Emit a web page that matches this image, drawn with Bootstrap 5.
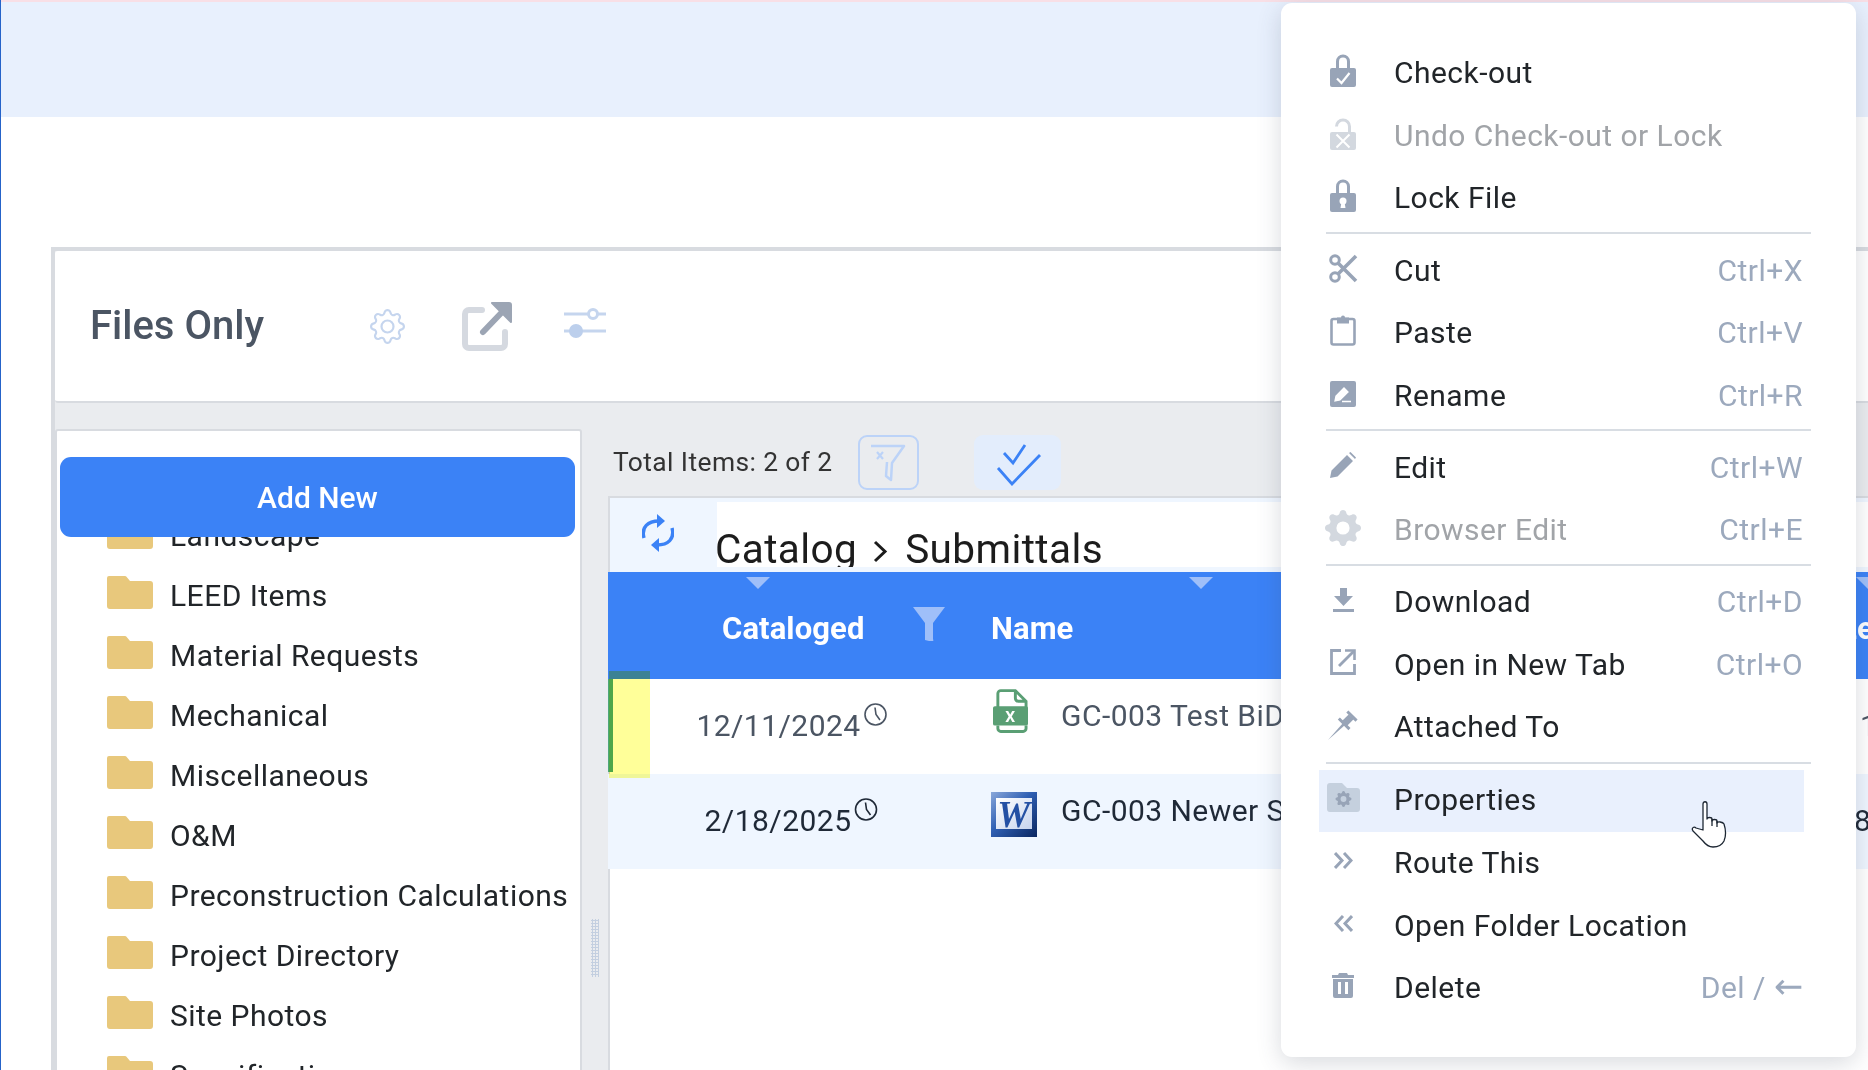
<!DOCTYPE html>
<html lang="en">
<head>
<meta charset="utf-8">
<title>Files Only</title>
<link href="https://cdn.jsdelivr.net/npm/bootstrap@5.3.0/dist/css/bootstrap.min.css" rel="stylesheet">
<style>
html,body{height:1070px;overflow:hidden}
body{font-family:Roboto,"Liberation Sans",sans-serif;color:#212529;background:#fff;border-left:1px solid #2563c9;position:relative;font-size:30px;letter-spacing:.46px}
.top-band{height:117px;background:#e8f0fd;border-top:2px solid #f8dfe6}
.shell{margin:130px 0 0 50px;border-top:4px solid #d8dbe0;border-left:4px solid #d8dbe0;background:#eaecef;height:823px}
.title-bar{height:152px;background:#fff;border-bottom:2px solid #d8dbe0;padding-left:35px;border-radius:3px 0 0 3px}
.title-text{font-size:40px;font-weight:500;color:#4b5563;letter-spacing:0;margin:0;width:280px}
.ico-ext{margin-left:57px}
.ico-sliders{margin:-6px 0 0 51px}
.work{padding-top:26px;height:670px}
.side{width:527px;flex:none;background:#fff;border:2px solid #d8dbe0;border-radius:3px;position:relative;overflow:hidden;height:700px}
.add-btn{position:absolute;left:3px;top:26px;width:515px;height:80px;background:#3b82f6;border:0;border-radius:11px;font-size:30px;font-weight:500;letter-spacing:0;color:#fff;padding-top:7px}
.folders{padding:74px 0 0 50px;margin:0;list-style:none}
.folders li{height:60px;display:flex;align-items:center;gap:17px;white-space:nowrap}
.folders svg{margin-top:-5px;flex:none}
.grip{width:26px;flex:none;padding:490px 0 0 9px}
.grip i{display:block;width:8px;height:58px;background-image:radial-gradient(#c3cfe0 1.1px,transparent 1.2px);background-size:3px 3px}
.main-pane{width:1300px;flex:none}
.tool-row{height:67px;padding:6px 0 0 5px;font-size:26.400px;letter-spacing:.4px;color:#333}
.total-txt{padding-top:8px}
.filter-btn{width:61px;height:55px;border:2px solid #bcd3f8;border-radius:9px;background:transparent;margin-left:25px;padding:0}
.check-btn{width:87px;height:55px;border:0;border-radius:9px;background:#e3edfc;margin-left:55px;padding:4px 0 0 4px}
.table-pane{border-left:2px solid #d8dbe0;border-top:2px solid #d8dbe0;background:#fff;height:600px}
.crumb-row{height:74px;background:#eff6ff;padding-top:4px}
.refresh{width:107px;flex:none;padding:6px 0 0 32px}
.crumb{height:65px;background:#fff;flex:1;overflow:hidden;font-size:40.500px;letter-spacing:.4px;line-height:94px;white-space:nowrap;color:#1c1c1c;text-indent:-2px}
.crumb svg{margin:0 17px 0 16px;vertical-align:0}
.head-row{height:107px;background:#3b82f6;margin-left:-2px;color:#fff;font-weight:700;font-size:31px;letter-spacing:.1px;position:relative}
.hc{position:absolute;top:5px;width:0;height:0;border-left:12px solid transparent;border-right:12px solid transparent;border-top:12px solid #9fbff9}
.hc-a{left:138px}
.hc-b{left:581px}
.hc-c{left:1248px}
.col-date{width:367px;flex:none}
.col-name{width:839px;flex:none;padding-left:16px;overflow:hidden;white-space:nowrap}
.col-next{flex:none;white-space:nowrap}
.head-row .col-date{padding:34px 0 0 114px;display:flex;align-items:flex-start}
.head-row .col-date svg{margin:1px 0 0 49px}
.head-row .col-name{padding-top:34px}
.head-row .col-next{padding-top:34px}
.file-row{height:95px;margin-left:-2px;position:relative;color:#4b5563}
.file-row.alt{background:#eff6ff;color:#1f2937}
.file-row .col-date{display:flex;justify-content:center;padding-top:24px;font-size:30px;line-height:46px}
.file-row .col-date svg{margin:0 0 0 3px}
.file-row .col-name{display:flex;padding-top:9px;font-size:30px}
.slot-ico{width:70px;flex:none}
.xl-ico{display:block;margin-left:2px}
.wd-ico{display:block;margin-top:9px}
.fname{line-height:56px}
.val-a{padding:24px 0 0 46px;line-height:46px}
.val-b{padding:24px 0 0 40px;line-height:46px}
.mark-bar{position:absolute;left:0;top:0;width:5px;height:93px;background:#4ea67a}
.mark-hi{position:absolute;left:1px;top:-8px;width:41px;height:107px;background:#ffff99;mix-blend-mode:multiply;z-index:2}
.ctx{position:absolute;display:block;left:1280px;top:3px;width:575px;height:1054px;margin:0;border:0;border-radius:11px;background:#fff;box-shadow:0 6px 24px rgba(60,70,90,.2);padding:38px 52px 0 38px;font-size:30px;z-index:5}
.ctx .dropdown-item{display:flex;align-items:center;height:62.700px;padding:1.500px 1px 0 0;color:#212529;letter-spacing:.46px}
.ctx .dropdown-item.is-off{color:#a1a4a8}
.ctx .dropdown-item.is-on{background:#e9f0fd}
.ctx .dropdown-item.head-item{padding:0 1px 0 0}
.ctx .dropdown-item.tail{padding:0 1px 2.500px 0}
.ctx .dropdown-divider{margin:3px -7px 4px 7px;border-top:2px solid #d8dde3;opacity:1}
.ctx .dropdown-divider.last-sep{margin:4px -7px 6px 7px}
.ico{width:48px;flex:none;margin-right:27px;display:flex;justify-content:center;padding-bottom:4px}
.key{margin-left:auto;color:#9ca9bd}
.key b{font-family:"DejaVu Sans",sans-serif;font-weight:400;font-size:35px;line-height:1;letter-spacing:0}
.hand{position:absolute;left:1690px;top:800px;z-index:6}
</style>
</head>
<body>
<div class="top-band"></div>
<div class="shell">
  <div class="title-bar d-flex align-items-center">
    <h1 class="title-text">Files Only</h1>
    <svg width="35" height="35" viewBox="0 0 16 16" fill="#c5d5ee"><path d="M8 4.754a3.246 3.246 0 1 0 0 6.492 3.246 3.246 0 0 0 0-6.492zM5.754 8a2.246 2.246 0 1 1 4.492 0 2.246 2.246 0 0 1-4.492 0z"/><path d="M9.796 1.343c-.527-1.79-3.065-1.79-3.592 0l-.094.319a.873.873 0 0 1-1.255.52l-.292-.16c-1.64-.892-3.433.902-2.54 2.541l.159.292a.873.873 0 0 1-.52 1.255l-.319.094c-1.79.527-1.79 3.065 0 3.592l.319.094a.873.873 0 0 1 .52 1.255l-.16.292c-.892 1.64.901 3.434 2.541 2.54l.292-.159a.873.873 0 0 1 1.255.52l.094.319c.527 1.79 3.065 1.79 3.592 0l.094-.319a.873.873 0 0 1 1.255-.52l.292.16c1.64.893 3.434-.902 2.54-2.541l-.159-.292a.873.873 0 0 1 .52-1.255l.319-.094c1.79-.527 1.79-3.065 0-3.592l-.319-.094a.873.873 0 0 1-.52-1.255l.16-.292c.893-1.64-.902-3.433-2.541-2.54l-.292.159a.873.873 0 0 1-1.255-.52l-.094-.319zm-2.633.283c.246-.835 1.428-.835 1.674 0l.094.319a1.873 1.873 0 0 0 2.693 1.115l.291-.16c.764-.415 1.6.42 1.184 1.185l-.159.292a1.873 1.873 0 0 0 1.116 2.692l.318.094c.835.246.835 1.428 0 1.674l-.319.094a1.873 1.873 0 0 0-1.115 2.693l.16.291c.415.764-.42 1.6-1.185 1.184l-.291-.159a1.873 1.873 0 0 0-2.693 1.116l-.094.318c-.246.835-1.428.835-1.674 0l-.094-.319a1.873 1.873 0 0 0-2.692-1.115l-.292.16c-.764.415-1.6-.42-1.184-1.185l.159-.291A1.873 1.873 0 0 0 1.945 8.930l-.319-.094c-.835-.246-.835-1.428 0-1.674l.319-.094A1.873 1.873 0 0 0 3.060 4.377l-.16-.292c-.415-.764.42-1.600 1.185-1.184l.292.159a1.873 1.873 0 0 0 2.692-1.115l.094-.319z"/></svg>
    <svg class="ico-ext" width="51" height="50" viewBox="0 0 51 50" fill="none" stroke-linecap="round" stroke-linejoin="round"><path d="M20 9H7a4 4 0 0 0-4 4v30a4 4 0 0 0 4 4h32a4 4 0 0 0 4-4V31" stroke="#d5d9e0" stroke-width="6"/><path d="M21 31 43 8" stroke="#9ca5b4" stroke-width="6"/><path d="M30 2h17a2 2 0 0 1 2 2v17z" fill="#9ca5b4" stroke="#9ca5b4" stroke-width="2"/></svg>
    <svg class="ico-sliders" width="42" height="30" viewBox="0 0 42 30" fill="none" stroke="#c5d5ee" stroke-width="3"><path d="M0 6h24M34 6h8M0 23h42"/><circle cx="29" cy="6" r="4.500"/><circle cx="12" cy="23" r="7" fill="#bccfec" stroke="none"/></svg>
  </div>
  <div class="work d-flex">
    <aside class="side">
      <ul class="folders">
        <li><svg width="46" height="33" viewBox="0 0 46 33"><use href="#fld"/></svg>Landscape</li>
        <li><svg width="46" height="33" viewBox="0 0 46 33"><path id="fld" fill="#e8c87c" d="M2 0h16a2 2 0 0 1 1.500.7L23 5h20a3 3 0 0 1 3 3v22a3 3 0 0 1-3 3H3a3 3 0 0 1-3-3V2a2 2 0 0 1 2-2z"/></svg>LEED Items</li>
        <li><svg width="46" height="33" viewBox="0 0 46 33"><use href="#fld"/></svg>Material Requests</li>
        <li><svg width="46" height="33" viewBox="0 0 46 33"><use href="#fld"/></svg>Mechanical</li>
        <li><svg width="46" height="33" viewBox="0 0 46 33"><use href="#fld"/></svg>Miscellaneous</li>
        <li><svg width="46" height="33" viewBox="0 0 46 33"><use href="#fld"/></svg>O&amp;M</li>
        <li><svg width="46" height="33" viewBox="0 0 46 33"><use href="#fld"/></svg>Preconstruction Calculations</li>
        <li><svg width="46" height="33" viewBox="0 0 46 33"><use href="#fld"/></svg>Project Directory</li>
        <li><svg width="46" height="33" viewBox="0 0 46 33"><use href="#fld"/></svg>Site Photos</li>
        <li><svg width="46" height="33" viewBox="0 0 46 33"><use href="#fld"/></svg>Specifications</li>
      </ul>
      <button type="button" class="btn add-btn">Add New</button>
    </aside>
    <div class="grip"><i></i></div>
    <section class="main-pane">
      <div class="tool-row d-flex align-items-start">
        <span class="total-txt">Total Items: 2 of 2</span>
        <button type="button" class="btn filter-btn"><svg width="36" height="40" viewBox="0 0 36 40" fill="none" stroke="#bcd3f8" stroke-width="2.500"><path d="M1 3h33L22 20l-1 17-5-4 1-14" stroke-linejoin="round"/><path d="M7 9l6 7M13 9l-6 7" stroke-width="2.200"/></svg></button>
        <button type="button" class="btn check-btn"><svg width="46" height="42" viewBox="0 0 46 42" fill="none" stroke="#3b82f6" stroke-width="2.800"><path d="M8 9l9 10L29 1"/><path d="M2 24l14 16L44 11"/></svg></button>
      </div>
      <div class="table-pane">
        <div class="crumb-row d-flex">
          <div class="refresh"><svg width="32" height="40" viewBox="0 0 32 40" fill="none" stroke="#3b82f6" stroke-width="3.400"><path d="M2 25C-1 14 6 8 17 8"/><path d="M30 15c3 11-4 17-15 17"/><path d="M15 1l8 7-8 7z" fill="#3b82f6" stroke="none"/><path d="M17 25l-8 7 8 7z" fill="#3b82f6" stroke="none"/></svg></div>
          <div class="crumb">Catalog<svg width="15" height="23" viewBox="0 0 15 23" fill="none" stroke="#1c1c1c" stroke-width="3"><path d="M2 2l10 9.500L2 21"/></svg>Submittals</div>
        </div>
        <div class="head-row d-flex">
          <span class="hc hc-a"></span><span class="hc hc-b"></span><span class="hc hc-c"></span>
          <div class="col-date">Cataloged<svg width="32" height="34" viewBox="0 0 32 34" fill="#9fbff9"><path d="M0 0h32L20 16v16a2 2 0 0 1-4 2l-4-1V16z"/></svg></div>
          <div class="col-name">Name</div>
          <div class="col-next">Size</div>
        </div>
        <div class="file-row d-flex">
          <div class="col-date">12/11/2024<svg width="23" height="23" viewBox="0 0 23 23" fill="none" stroke="#4b5563" stroke-width="1.600"><circle cx="11.500" cy="11.500" r="10.500"/><path d="M11 4.500l1 7 4 5.500"/></svg></div>
          <div class="col-name"><span class="slot-ico"><svg class="xl-ico" width="35" height="46" viewBox="0 0 36 46"><path fill="none" stroke="#5a9f74" stroke-width="3" d="M5 20V5a3 3 0 0 1 3-3h15l11 11v7M5 38v3a3 3 0 0 0 3 3h23a3 3 0 0 0 3-3v-3M23 2v8a3 3 0 0 0 3 3h8"/><rect y="18" width="36" height="20" rx="2" fill="#5a9f74"/><text x="18" y="34" fill="#fff" text-anchor="middle" font-family="Roboto" font-weight="700" font-size="16">X</text></svg></span><span class="fname">GC-003 Test BiD Document</span></div>
          <div class="col-next val-a">1</div>
          <span class="mark-bar"></span><span class="mark-hi"></span>
        </div>
        <div class="file-row alt d-flex">
          <div class="col-date">2/18/2025<svg width="24" height="23" viewBox="0 0 23 23" fill="none" stroke="#1f2937" stroke-width="1.600"><circle cx="11.500" cy="11.500" r="10.500"/><path d="M11 4.500l1 7 4 5.500"/></svg></div>
          <div class="col-name"><span class="slot-ico"><svg class="wd-ico" width="46" height="45" viewBox="0 0 46 45"><defs><linearGradient id="wg" x1="0" y1="0" x2="1" y2="1"><stop offset="0" stop-color="#8aa8da"/><stop offset=".45" stop-color="#2f5fb3"/><stop offset="1" stop-color="#0a2660"/></linearGradient><linearGradient id="wi" x1="0" y1="0" x2="1" y2="1"><stop offset="0" stop-color="#fff"/><stop offset="1" stop-color="#c6d3ee"/></linearGradient></defs><rect width="46" height="45" fill="url(#wg)"/><rect x="5" y="6" width="36" height="31" fill="url(#wi)"/><text x="23" y="35" fill="#2450a4" text-anchor="middle" font-family="Liberation Serif" font-style="italic" font-weight="700" font-size="37">W</text></svg></span><span class="fname">GC-003 Newer Submittal File</span></div>
          <div class="col-next val-b">8</div>
        </div>
      </div>
    </section>
  </div>
</div>

<ul class="dropdown-menu show ctx">
  <li><a class="dropdown-item head-item" href="#"><span class="ico"><svg width="26" height="33" viewBox="0 0 26 33"><path d="M7.500 15V7.500a5.500 5.500 0 0 1 11 0V15" fill="none" stroke="#98a4b7" stroke-width="3"/><rect y="14" width="26" height="19" rx="2" fill="#98a4b7"/><path d="M7 24.500l4.500 4.500 8-10" fill="none" stroke="#fff" stroke-width="2.200"/></svg></span>Check-out</a></li>
  <li><a class="dropdown-item head-item is-off" href="#"><span class="ico"><svg width="26" height="33" viewBox="0 0 26 33"><path d="M6.500 9.500a6.500 6.500 0 0 1 13 0V16" fill="none" stroke="#d3d8df" stroke-width="3"/><rect y="15" width="26" height="18" rx="2" fill="#d3d8df"/><path d="M6.500 17.500l13 13M19.500 17.500l-13 13" stroke="#fff" stroke-width="2"/></svg></span>Undo Check-out or Lock</a></li>
  <li><a class="dropdown-item head-item" href="#"><span class="ico"><svg width="26" height="33" viewBox="0 0 26 33"><path d="M7.500 15V7.500a5.500 5.500 0 0 1 11 0V15" fill="none" stroke="#98a4b7" stroke-width="3"/><rect y="14" width="26" height="19" rx="2" fill="#98a4b7"/><circle cx="13" cy="22" r="3.500" fill="#fff"/><path d="M11.500 23h3l1 6h-5z" fill="#fff"/></svg></span>Lock File</a></li>
  <li><hr class="dropdown-divider"></li>
  <li><a class="dropdown-item" href="#"><span class="ico"><svg width="29" height="29" viewBox="0 0 29 29" fill="none" stroke="#98a4b7" stroke-width="3"><circle cx="6" cy="6" r="4.300"/><circle cx="6" cy="23" r="4.300"/><path d="M9 9l18 18M9 20L27 2" stroke-width="3.600"/></svg></span>Cut<span class="key">Ctrl+X</span></a></li>
  <li><a class="dropdown-item" href="#"><span class="ico"><svg width="26" height="31" viewBox="0 0 26 31"><rect x="1.500" y="4" width="23" height="25.500" rx="2" fill="none" stroke="#98a4b7" stroke-width="2.600"/><path d="M7 1.500h4a2 2 0 0 1 4 0h4v6H7z" fill="#98a4b7" transform="translate(0 1)"/></svg></span>Paste<span class="key">Ctrl+V</span></a></li>
  <li><a class="dropdown-item" href="#"><span class="ico"><svg width="26" height="26" viewBox="0 0 26 26"><rect width="26" height="26" rx="2" fill="#98a4b7"/><path d="M5 20l1-5 8-8 4 4-8 8zM12 20.500h9" fill="#fff" stroke="#fff" stroke-width="1.300"/></svg></span>Rename<span class="key">Ctrl+R</span></a></li>
  <li><hr class="dropdown-divider"></li>
  <li><a class="dropdown-item" href="#"><span class="ico"><svg width="26" height="26" viewBox="0 0 26 26" fill="#98a4b7"><path d="M0 26l1.500-7.500L17 3l6 6L7.500 24.500zM19 1l1.500-1L26 5.500 25 7z"/></svg></span>Edit<span class="key">Ctrl+W</span></a></li>
  <li><a class="dropdown-item is-off" href="#"><span class="ico"><svg width="36" height="36" viewBox="0 0 16 16" fill="#d3d8df"><path d="M9.405 1.050c-.413-1.400-2.397-1.400-2.810 0l-.1.340a1.464 1.464 0 0 1-2.105.872l-.31-.17c-1.283-.698-2.686.705-1.987 1.987l.169.311c.446.820.023 1.841-.872 2.105l-.34.1c-1.400.413-1.400 2.397 0 2.810l.34.1a1.464 1.464 0 0 1 .872 2.105l-.17.310c-.698 1.283.705 2.686 1.987 1.987l.311-.169a1.464 1.464 0 0 1 2.105.872l.1.340c.413 1.400 2.397 1.400 2.810 0l.1-.34a1.464 1.464 0 0 1 2.105-.872l.31.170c1.283.698 2.686-.705 1.987-1.987l-.169-.311a1.464 1.464 0 0 1 .872-2.105l.34-.1c1.400-.413 1.400-2.397 0-2.810l-.34-.1a1.464 1.464 0 0 1-.872-2.105l.17-.31c.698-1.283-.705-2.686-1.987-1.987l-.311.169a1.464 1.464 0 0 1-2.105-.872l-.1-.34zM8 10.930a2.929 2.929 0 1 1 0-5.860 2.929 2.929 0 0 1 0 5.858z"/></svg></span>Browser Edit<span class="key">Ctrl+E</span></a></li>
  <li><hr class="dropdown-divider"></li>
  <li><a class="dropdown-item" href="#"><span class="ico"><svg width="21" height="24" viewBox="0 0 21 24" fill="#98a4b7"><path d="M7 0h7v8h6L10.500 18 1 8h6zM0 21h21v3H0z"/></svg></span>Download<span class="key">Ctrl+D</span></a></li>
  <li><a class="dropdown-item" href="#"><span class="ico"><svg width="26" height="26" viewBox="0 0 26 26" fill="none" stroke="#98a4b7" stroke-width="2.800"><path d="M11 1.500H1.500v23h23V15"/><path d="M9 17 24 2"/><path d="M15 1.500h9.500V11" stroke-width="2.600"/></svg></span>Open in New Tab<span class="key">Ctrl+O</span></a></li>
  <li><a class="dropdown-item" href="#"><span class="ico"><svg width="31" height="31" viewBox="0 0 31 31" fill="#98a4b7"><path d="M0 31l15-17 2 2z"/><g transform="translate(25 6) rotate(45)"><path d="M-6.500 0h13v3h-13zM-3.500 3h7v8h-7zM-7.500 11h15v3h-15z"/></g></svg></span>Attached To</a></li>
  <li><hr class="dropdown-divider last-sep"></li>
  <li><a class="dropdown-item is-on tail" href="#"><span class="ico"><svg width="33" height="29" viewBox="0 0 33 29"><path fill="#c5d0de" d="M3 0h12l5 5h10a3 3 0 0 1 3 3v18a3 3 0 0 1-3 3H3a3 3 0 0 1-3-3V3a3 3 0 0 1 3-3z"/><path fill="#98a4b7" transform="translate(8.500 8)" d="M9.405 1.050c-.413-1.400-2.397-1.400-2.810 0l-.1.340a1.464 1.464 0 0 1-2.105.872l-.31-.17c-1.283-.698-2.686.705-1.987 1.987l.169.311c.446.820.023 1.841-.872 2.105l-.34.1c-1.400.413-1.400 2.397 0 2.810l.34.1a1.464 1.464 0 0 1 .872 2.105l-.17.310c-.698 1.283.705 2.686 1.987 1.987l.311-.169a1.464 1.464 0 0 1 2.105.872l.1.340c.413 1.400 2.397 1.400 2.810 0l.1-.34a1.464 1.464 0 0 1 2.105-.872l.31.170c1.283.698 2.686-.705 1.987-1.987l-.169-.311a1.464 1.464 0 0 1 .872-2.105l.34-.1c1.400-.413 1.400-2.397 0-2.810l-.34-.1a1.464 1.464 0 0 1-.872-2.105l.17-.31c.698-1.283-.705-2.686-1.987-1.987l-.311.169a1.464 1.464 0 0 1-2.105-.872l-.1-.34zM8 10.930a2.929 2.929 0 1 1 0-5.860 2.929 2.929 0 0 1 0 5.858z"/></svg></span>Properties</a></li>
  <li><a class="dropdown-item tail" href="#"><span class="ico"><svg width="19" height="17" viewBox="0 0 19 17" fill="none" stroke="#98a4b7" stroke-width="3"><path d="M1 1l7 7.500L1 16M10 1l7 7.500L10 16"/></svg></span>Route This</a></li>
  <li><a class="dropdown-item tail" href="#"><span class="ico"><svg width="19" height="17" viewBox="0 0 19 17" fill="none" stroke="#98a4b7" stroke-width="3"><path d="M18 1l-7 7.500L18 16M9 1 2 8.500 9 16"/></svg></span>Open Folder Location</a></li>
  <li><a class="dropdown-item tail" href="#"><span class="ico"><svg width="22" height="25" viewBox="0 0 22 25" fill="#98a4b7"><path d="M0 2h6l1-2h8l1 2h6v3H0zM1 6h20v17a2 2 0 0 1-2 2H3a2 2 0 0 1-2-2zM6 9v12h3V9zM13 9v12h3V9z" fill-rule="evenodd"/></svg></span>Delete<span class="key">Del / <b>←</b></span></a></li>
</ul>

<svg class="hand" width="36" height="48" viewBox="0 0 36 48" fill="#fff" stroke="#1d2733" stroke-width="1.300" stroke-linejoin="round"><path d="M12 30V4c0-3 4-3 4 0v15c0-2 5-2 5 0v2c0-2 5-2 5 0v2c0-2 6-1 7 1 2 6 2 12 0 17-2 4-6 6-11 6-4 0-7-2-10-6L2 31c-2-3 1-5 3-3z"/><path d="M21 19v7M26 21v6" fill="none"/></svg>
<script src="https://cdn.jsdelivr.net/npm/bootstrap@5.3.0/dist/js/bootstrap.bundle.min.js"></script>
</body>
</html>
